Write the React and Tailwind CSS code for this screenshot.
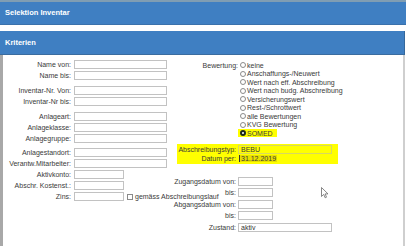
import React from "react";

function Box({ className, children }) {
  return (
    <div className={"shrink-0 h-[9px] border border-[#c2c2c2] bg-white flex items-center pl-[2px] text-[7px] leading-none text-[#333] " + className}>
      {children}
    </div>
  );
}

function LRow({ label, wide = true, children }) {
  return (
    <div className="flex items-center h-[11px]">
      <div className="shrink-0 w-[68px] flex justify-end whitespace-nowrap">{label}</div>
      <Box className={wide ? "ml-[3px] w-[93px]" : "ml-[3px] w-[50px]"} />
      {children}
    </div>
  );
}

function Radio({ label, checked }) {
  return (
    <div className="flex items-center h-[8.5px]">
      <div className={checked ? "flex items-center h-[8px] bg-[#ffff00] pr-[4px]" : "flex items-center"}>
        {checked ? (
          <span className="ml-[2px] w-[6px] h-[6px] rounded-full border-[2px] border-[#1e2a1e] bg-white" />
        ) : (
          <span className="ml-[2px] w-[6px] h-[6px] rounded-full border border-[#8a8a8a] bg-white" />
        )}
        <span className="ml-[1px] whitespace-nowrap">{label}</span>
      </div>
    </div>
  );
}

function RRow({ label, wide, value }) {
  return (
    <div className="flex items-center h-[11.5px]">
      <div className="shrink-0 w-[59px] flex justify-end whitespace-nowrap">{label}</div>
      <Box className={wide ? "ml-[2px] w-[94px]" : "ml-[2px] w-[35px]"}>{value}</Box>
    </div>
  );
}

export default function App() {
  return (
    <div className="relative w-[406px] h-[246px] bg-white overflow-hidden font-['Liberation_Sans',Arial,sans-serif] text-[7px] leading-none text-[#3a3a3a]">
      <div className="h-[25px] bg-[#3f7fc2] border-t-[2px] border-[#7f9db3] border-b border-b-[#3a71ab] flex items-center px-[5px] text-white font-bold text-[7.5px]">
        Selektion Inventar
      </div>
      <div className="h-[6px]" />
      <div className="w-[405px]">
        <div className="h-[24px] bg-[#3f7fc2] border-b border-[#3a6c9f] border-r border-r-[#35689c] flex items-center px-[5px] text-white font-bold text-[7.5px]">
          Kriterien
        </div>
        <div className="h-[191px] border-l-[3px] border-[#a8a8a8] border-r-[2px] border-r-[#cfcfcf] flex">
          <div className="w-[174px] shrink-0 pt-[4px]">
            <LRow label="Name von:" />
            <LRow label="Name bis:" />
            <div className="h-[4px]" />
            <LRow label="Inventar-Nr. Von:" />
            <LRow label="Inventar-Nr bis:" />
            <div className="h-[4px]" />
            <LRow label="Anlageart:" />
            <LRow label="Anlageklasse:" />
            <LRow label="Anlagegruppe:" />
            <div className="h-[3px]" />
            <LRow label="Anlagestandort:" />
            <LRow label="Verantw.Mitarbeiter:" />
            <LRow label="Aktivkonto:" wide={false} />
            <LRow label="Abschr. Kostenst.:" wide={false} />
            <LRow label="Zins:" wide={false}>
              <span className="ml-[3px] w-[6px] h-[6px] border border-[#8a8a8a] bg-white shrink-0" />
              <span className="ml-[2px] whitespace-nowrap shrink-0">gemäss Abschreibungslauf</span>
            </LRow>
          </div>
          <div className="flex-1 pt-[6px]">
            <div className="flex">
              <div className="w-[61px] flex justify-end h-[8.5px] items-center whitespace-nowrap">Bewertung:</div>
              <div className="flex flex-col">
                <Radio label="keine" />
                <Radio label="Anschaffungs-/Neuwert" />
                <Radio label="Wert nach eff. Abschreibung" />
                <Radio label="Wert nach budg. Abschreibung" />
                <Radio label="Versicherungswert" />
                <Radio label="Rest-/Schrottwert" />
                <Radio label="alle Bewertungen" />
                <Radio label="KVG Bewertung" />
                <Radio label="SOMED" checked />
              </div>
            </div>
            <div className="mt-[6px] w-[161px] h-[20px] bg-[#ffff00] pt-[1px]">
              <div className="flex items-center h-[9.5px]">
                <div className="w-[59px] flex justify-end whitespace-nowrap">Abschreibungstyp:</div>
                <div className="ml-[2px] w-[94px] h-[9px] border border-[#d8d860] flex items-center pl-[2px]">BEBU</div>
              </div>
              <div className="flex items-center h-[9.5px]">
                <div className="w-[59px] flex justify-end whitespace-nowrap">Datum per:</div>
                <div className="ml-[2px] w-[94px] h-[9px] flex items-center pl-[1px]">
                  <span className="w-[1px] h-[7px] bg-[#333]" />
                  <span className="bg-[#e8e000] px-[1px]">31.12.2019</span>
                </div>
              </div>
            </div>
            <div className="h-[12px]" />
            <RRow label="Zugangsdatum von:" />
            <RRow label="bis:" />
            <RRow label="Abgangsdatum von:" />
            <RRow label="bis:" />
            <RRow label="Zustand:" wide value="aktiv" />
          </div>
        </div>
      </div>
      <svg className="absolute left-[321px] top-[187px]" width="8" height="12" viewBox="0 0 8 12">
        <path d="M0.5 0.5 L0.5 9.5 L2.7 7.4 L4.2 10.8 L5.5 10.2 L4.1 6.9 L7 6.9 Z" fill="white" stroke="#6a6a6a" strokeWidth="0.8" />
      </svg>
    </div>
  );
}
